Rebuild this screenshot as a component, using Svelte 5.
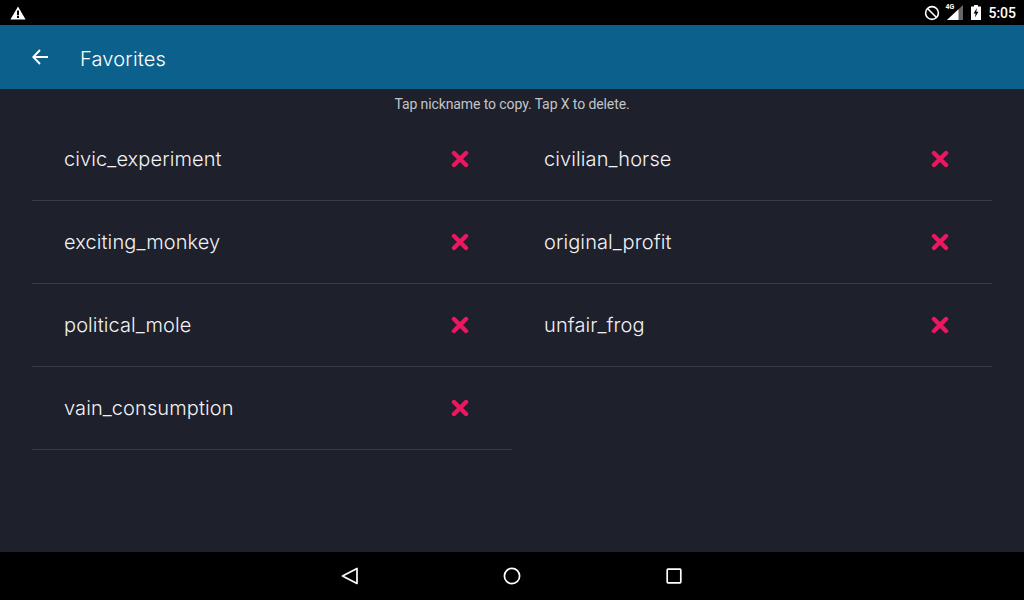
<script>
  const favorites = [
    'civic_experiment',
    'civilian_horse',
    'exciting_monkey',
    'original_profit',
    'political_mole',
    'unfair_frog',
    'vain_consumption'
  ];
</script>

<div class="screen">
  <div class="status">
    <svg class="warn" width="16" height="14" viewBox="0 0 16 14">
      <path d="M8 0.5 L15.6 13.5 H0.4 Z" fill="#fff" />
      <rect x="7" y="4.5" width="2" height="4.8" fill="#000" />
      <rect x="7" y="10" width="2" height="2" fill="#000" />
    </svg>
    <div class="status-right">
      <svg width="16" height="16" viewBox="0 0 16 16" fill="none" stroke="#fff" stroke-width="1.6">
        <circle cx="8" cy="8" r="6.4" />
        <path d="M3.5 3.5 L12.5 12.5" />
      </svg>
      <div class="signal">
        <span class="net">4G</span>
        <svg width="16" height="15" viewBox="0 0 16 15">
          <path d="M16 0 V15 H0 Z" fill="#666" />
          <path d="M11.5 4.3 V15 H0 Z" fill="#fff" />
        </svg>
      </div>
      <svg class="battery" width="10" height="15" viewBox="0 0 10 15">
        <path d="M3 0 H7 V1.5 H10 V15 H0 V1.5 H3 Z" fill="#fff" />
        <path d="M5.8 3 L2.6 8.6 H4.6 L4 12.6 L7.4 6.8 H5.3 Z" fill="#000" />
      </svg>
      <span class="time">5:05</span>
    </div>
  </div>

  <header>
    <svg width="16" height="16" viewBox="0 0 16 16" fill="none" stroke="#fff" stroke-width="1.9">
      <path d="M16 8 H1.5 M8 1 L1.3 8 L8 15" />
    </svg>
    <h1>Favorites</h1>
  </header>

  <main>
    <p>Tap nickname to copy. Tap X to delete.</p>
    <ul>
      {#each favorites as name}
        <li>
          <span class="name">{name}</span>
          <svg class="del" width="18" height="18" viewBox="0 0 18 18" stroke="#ec1760" stroke-width="4.4" stroke-linecap="round">
            <path d="M3 3 L15 15 M15 3 L3 15" />
          </svg>
        </li>
      {/each}
    </ul>
  </main>

  <nav>
    <svg width="18" height="18" viewBox="0 0 18 18" fill="none" stroke="#fff" stroke-width="1.7" stroke-linejoin="round">
      <path d="M16 1.5 V16.5 L1.5 9 Z" />
    </svg>
    <svg width="18" height="18" viewBox="0 0 18 18" fill="none" stroke="#fff" stroke-width="1.7">
      <circle cx="9" cy="9" r="7.6" />
    </svg>
    <svg width="18" height="18" viewBox="0 0 18 18" fill="none" stroke="#fff" stroke-width="1.7" stroke-linejoin="round">
      <rect x="2.2" y="2.2" width="13.6" height="13.6" rx="0.8" />
    </svg>
  </nav>
</div>

<style>
  :global(body) {
    margin: 0;
  }

  .screen {
    width: 1024px;
    height: 600px;
    display: flex;
    flex-direction: column;
    background: #1e202c;
    font-family: Inter, sans-serif;
    overflow: hidden;
  }

  .status {
    height: 25px;
    flex: none;
    background: #000;
    display: flex;
    align-items: center;
    justify-content: space-between;
    padding: 0 8px 0 10px;
  }

  .status-right {
    display: flex;
    align-items: center;
    gap: 7px;
  }

  .signal {
    position: relative;
    display: flex;
  }

  .net {
    position: absolute;
    left: -2px;
    top: -2px;
    font: bold 7px Roboto, sans-serif;
    color: #fff;
  }

  .battery {
    margin-left: 1px;
  }

  .time {
    font: 500 14px Roboto, sans-serif;
    color: #fff;
  }

  header {
    height: 64px;
    flex: none;
    background: #0b618c;
    display: flex;
    align-items: center;
    padding-left: 32px;
    box-sizing: border-box;
    gap: 32px;
  }

  h1 {
    margin: 4px 0 0;
    font-size: 20px;
    font-weight: 300;
    letter-spacing: 0.2px;
    color: #fff;
  }

  main {
    flex: 1;
    padding: 0 32px;
  }

  p {
    margin: 0;
    height: 29px;
    text-align: center;
    font: 14px/30px Roboto, sans-serif;
    letter-spacing: -0.1px;
    color: #c4c5c9;
  }

  ul {
    list-style: none;
    margin: 0;
    padding: 0;
    display: grid;
    grid-template-columns: 480px 480px;
  }

  li {
    height: 83px;
    box-sizing: border-box;
    border-bottom: 1px solid #393b46;
    display: flex;
    align-items: center;
    justify-content: space-between;
    padding: 0 43px 1px 32px;
  }

  .name {
    font-size: 20px;
    font-weight: 300;
    letter-spacing: 0.1px;
    color: #f2f2f4;
  }

  nav {
    height: 48px;
    flex: none;
    background: #000;
    display: flex;
    align-items: center;
    justify-content: center;
    gap: 144px;
  }
</style>
